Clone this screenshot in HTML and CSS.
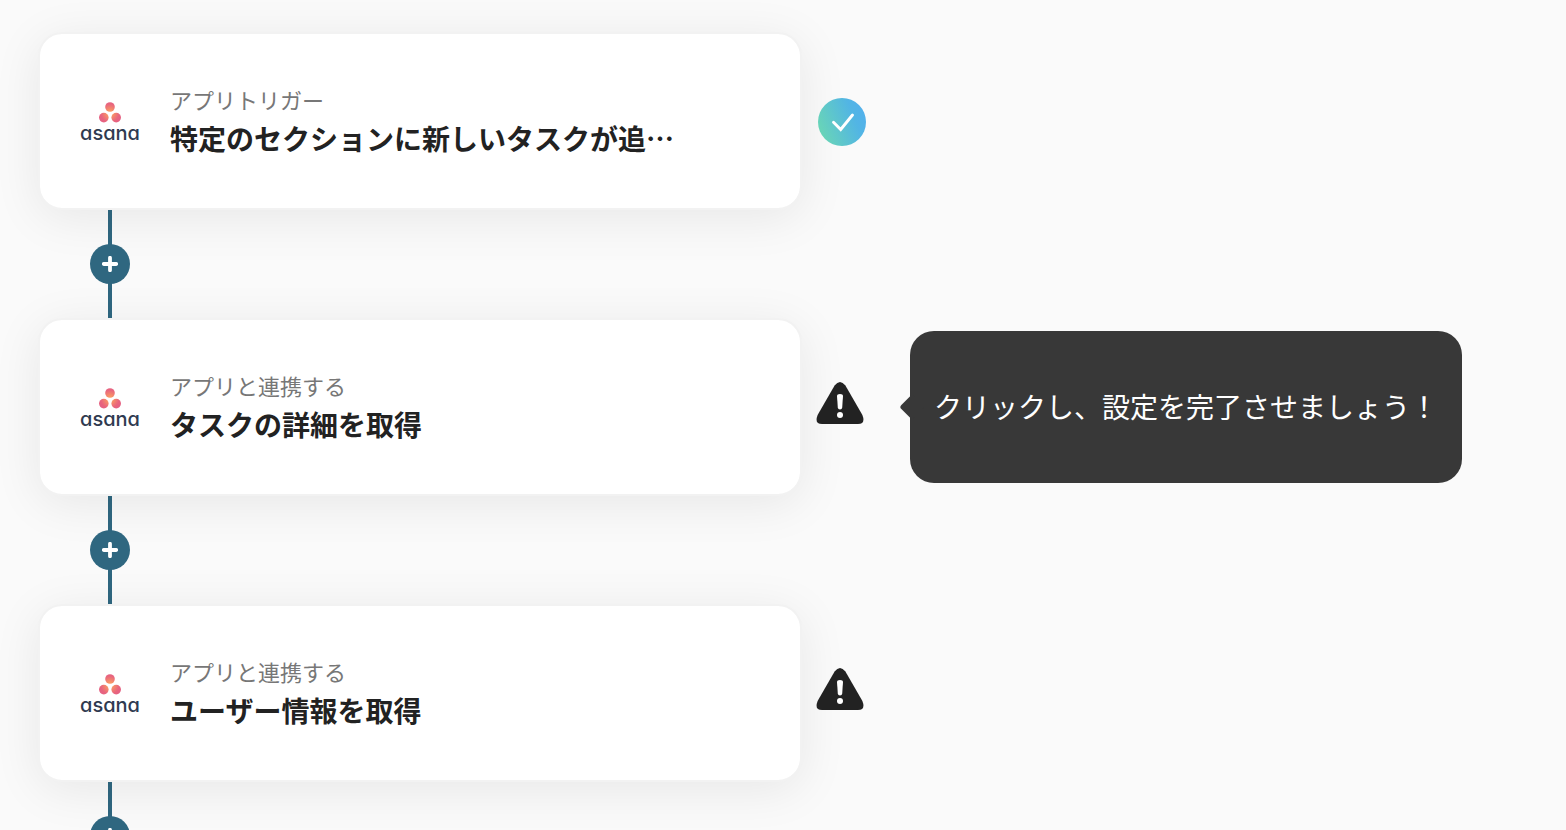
FILE: index.html
```html
<!DOCTYPE html>
<html lang="ja">
<head>
<meta charset="utf-8">
<meta name="viewport" content="width=device-width, initial-scale=1">
<title>フロー</title>
<link rel="stylesheet" href="styles.css">
</head>
<body>
<svg class="defs" width="0" height="0" aria-hidden="true">
  <defs>
    <radialGradient id="dots" gradientUnits="userSpaceOnUse" cx="12" cy="12" r="14">
      <stop offset="0" stop-color="#fba65c"/>
      <stop offset=".3" stop-color="#f58a6b"/>
      <stop offset=".65" stop-color="#e8647e"/>
      <stop offset="1" stop-color="#e25f86"/>
    </radialGradient>
    <linearGradient id="done" x1="0" y1=".7" x2="1" y2=".3">
      <stop offset=".05" stop-color="#68d4b8"/>
      <stop offset=".75" stop-color="#52b5e4"/>
      <stop offset="1" stop-color="#52b0ec"/>
    </linearGradient>
    <symbol id="asana" viewBox="0 0 24 22">
      <g fill="url(#dots)"><circle cx="12" cy="6" r="4.8"/><circle cx="5.8" cy="16.6" r="4.8"/><circle cx="18.2" cy="16.6" r="4.8"/></g>
    </symbol>
    <symbol id="plus" viewBox="0 0 16 16">
      <path d="M8 1.8v12.4M1.8 8h12.4" fill="none" stroke="#fff" stroke-width="3.8" stroke-linecap="round"/>
    </symbol>
    <symbol id="warning" viewBox="0 0 48 48">
      <path d="M18.6 5.6Q24-1.6 29.4 5.6L46.4 35Q49.8 44 42 44H6Q-1.8 44 1.6 35Z" fill="#222"/>
      <path d="M21 16Q21 14 24 14T27 16L26.2 27.4Q26 29.4 24 29.4T21.8 27.4Z" fill="#fff"/>
      <circle cx="24" cy="35" r="3" fill="#fff"/>
    </symbol>
  </defs>
</svg>
<ol class="flow">
  <li class="step">
    <div class="row">
      <button class="card" type="button">
        <span class="logo"><svg class="logo-mark"><use href="#asana"/></svg><span class="logo-name">asana</span></span>
        <span class="text"><span class="kind">アプリトリガー</span><span class="title">特定のセクションに新しいタスクが追…</span></span>
      </button>
      <span class="status status-done" role="img" aria-label="完了">
        <svg viewBox="0 0 48 48"><circle cx="24" cy="24" r="24" fill="url(#done)"/><path d="M15.5 24.2l7.2 7.3L34.5 17" fill="none" stroke="#fff" stroke-width="2.9" stroke-linecap="round"/></svg>
      </span>
    </div>
    <div class="connector"><button class="add" type="button" aria-label="追加"><svg><use href="#plus"/></svg></button></div>
  </li>
  <li class="step">
    <div class="row">
      <button class="card" type="button">
        <span class="logo"><svg class="logo-mark"><use href="#asana"/></svg><span class="logo-name">asana</span></span>
        <span class="text"><span class="kind">アプリと連携する</span><span class="title">タスクの詳細を取得</span></span>
      </button>
      <span class="status status-warning" role="img" aria-label="未設定"><svg><use href="#warning"/></svg></span>
      <div class="tooltip" role="tooltip">クリックし、設定を完了させましょう！</div>
    </div>
    <div class="connector"><button class="add" type="button" aria-label="追加"><svg><use href="#plus"/></svg></button></div>
  </li>
  <li class="step">
    <div class="row">
      <button class="card" type="button">
        <span class="logo"><svg class="logo-mark"><use href="#asana"/></svg><span class="logo-name">asana</span></span>
        <span class="text"><span class="kind">アプリと連携する</span><span class="title">ユーザー情報を取得</span></span>
      </button>
      <span class="status status-warning" role="img" aria-label="未設定"><svg><use href="#warning"/></svg></span>
    </div>
    <div class="connector"><button class="add" type="button" aria-label="追加"><svg><use href="#plus"/></svg></button></div>
  </li>
</ol>
</body>
</html>
```
FILE: styles.css
```css
* { box-sizing: border-box; }

body {
  margin: 0;
  height: 100vh;
  overflow: hidden;
  background: #fafafa;
  color: #222;
  font-family: "Noto Sans CJK JP", sans-serif;
}

button { font: inherit; color: inherit; cursor: pointer; }

.defs { position: absolute; }

.flow {
  margin: 0;
  padding: 32px 38px;
  list-style: none;
}

.row {
  display: flex;
  align-items: center;
  gap: 16px;
}

.card {
  flex: 0 1 764px;
  min-width: 0;
  display: flex;
  align-items: center;
  gap: 30px;
  padding: 48px 40px;
  border: 2px solid #f2f2f2;
  border-radius: 24px;
  background: #fff;
  background-clip: padding-box;
  box-shadow: 0 8px 48px rgba(0, 0, 0, 0.08);
  text-align: left;
}

.logo {
  flex: none;
  width: 60px;
  padding-top: 2px;
  display: flex;
  flex-direction: column;
  align-items: center;
}

.logo-mark { width: 24px; height: 22px; }

.logo-name {
  color: #2f3a50;
  font: 500 20px/20px Inter, sans-serif;
  font-feature-settings: "cv11";
}

.text { min-width: 0; display: flex; flex-direction: column; }

.kind {
  color: #777;
  font-size: 22px;
  line-height: 34px;
}

.title {
  overflow: hidden;
  font-size: 28px;
  font-weight: 700;
  line-height: 44px;
  text-overflow: ellipsis;
  white-space: nowrap;
}

.status { flex: none; width: 48px; height: 48px; }
.status svg { display: block; width: 100%; height: 100%; }
.status-done { margin-top: 2px; }
.status-warning { margin: 0 0 6px -2px; }

.tooltip {
  position: relative;
  margin-left: 30px;
  padding: 54px 24px 56px;
  border-radius: 24px;
  background: #383838;
  color: #fff;
  font-size: 28px;
  line-height: 42px;
  white-space: nowrap;
}

.tooltip::before {
  content: "";
  position: absolute;
  top: 50%;
  left: -7px;
  width: 18px;
  height: 18px;
  border-radius: 3px;
  background: inherit;
  transform: translateY(-50%) rotate(45deg);
}

.connector {
  width: 144px;
  height: 108px;
  display: flex;
  align-items: center;
  justify-content: center;
  background: linear-gradient(#2f6780, #2f6780) center / 4px 100% no-repeat;
}

.add {
  width: 40px;
  height: 40px;
  display: flex;
  align-items: center;
  justify-content: center;
  padding: 0;
  border: 0;
  border-radius: 50%;
  background: #2f6780;
}

.add svg { width: 16px; height: 16px; }
```
